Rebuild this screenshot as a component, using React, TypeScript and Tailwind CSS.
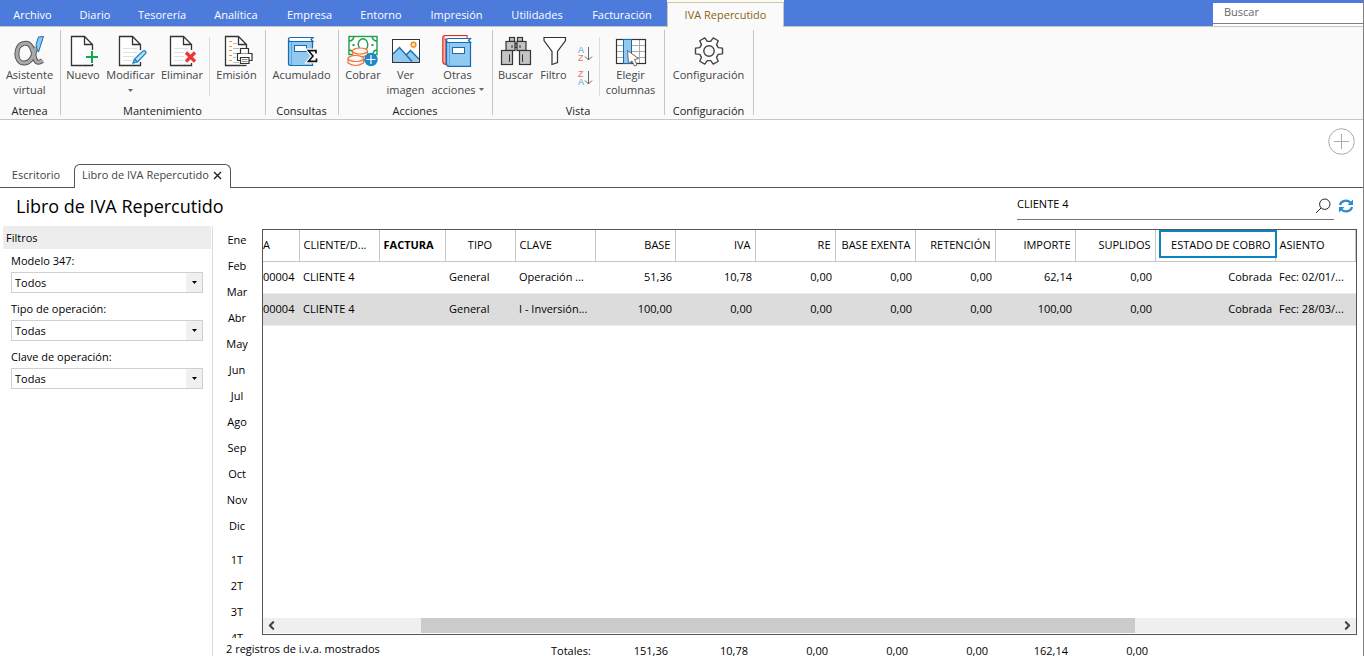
import { useState } from 'react'
import type { ReactNode } from 'react'
import { ChevronLeft, ChevronRight } from 'lucide-react'

const menu = [
  { label: 'Archivo', width: 'w-[65px]' },
  { label: 'Diario', width: 'w-[60px]' },
  { label: 'Tesorería', width: 'w-[74px]' },
  { label: 'Analítica', width: 'w-[74px]' },
  { label: 'Empresa', width: 'w-[73px]' },
  { label: 'Entorno', width: 'w-[70px]' },
  { label: 'Impresión', width: 'w-[81px]' },
  { label: 'Utilidades', width: 'w-[80px]' },
  { label: 'Facturación', width: 'w-[90px]' }
]

const months = ['Ene', 'Feb', 'Mar', 'Abr', 'May', 'Jun', 'Jul', 'Ago', 'Sep', 'Oct', 'Nov', 'Dic']
const quarters = ['1T', '2T', '3T', '4T']

const filters = [
  { id: 'modelo', label: 'Modelo 347:', value: 'Todos' },
  { id: 'tipo', label: 'Tipo de operación:', value: 'Todas' },
  { id: 'clave', label: 'Clave de operación:', value: 'Todas' }
]

const columns = [
  { label: 'A', width: 'w-9', head: 'text-left font-normal', cell: 'text-right' },
  { label: 'CLIENTE/D...', width: 'w-20', head: 'text-left font-normal', cell: 'text-left' },
  { label: 'FACTURA', width: 'w-[66px]', head: 'text-left font-bold', cell: 'text-left' },
  { label: 'TIPO', width: 'w-[70px]', head: 'text-center font-normal', cell: 'text-left' },
  { label: 'CLAVE', width: 'w-20', head: 'text-left font-normal', cell: 'text-left' },
  { label: 'BASE', width: 'w-20', head: 'text-right font-normal', cell: 'text-right' },
  { label: 'IVA', width: 'w-20', head: 'text-right font-normal', cell: 'text-right' },
  { label: 'RE', width: 'w-20', head: 'text-right font-normal', cell: 'text-right' },
  { label: 'BASE EXENTA', width: 'w-20', head: 'text-right font-normal', cell: 'text-right' },
  { label: 'RETENCIÓN', width: 'w-20', head: 'text-right font-normal', cell: 'text-right' },
  { label: 'IMPORTE', width: 'w-20', head: 'text-right font-normal', cell: 'text-right' },
  { label: 'SUPLIDOS', width: 'w-20', head: 'text-right font-normal', cell: 'text-right' },
  { label: 'ESTADO DE COBRO', width: 'w-[120px]', head: 'text-right font-normal', cell: 'text-right' },
  { label: 'ASIENTO', width: 'w-auto', head: 'text-left font-normal', cell: 'text-left' }
]

const rows = [
  ['00004', 'CLIENTE 4', '', 'General', 'Operación ...', '51,36', '10,78', '0,00', '0,00', '0,00', '62,14', '0,00', 'Cobrada', 'Fec: 02/01/...'],
  ['00004', 'CLIENTE 4', '', 'General', 'I - Inversión...', '100,00', '0,00', '0,00', '0,00', '0,00', '100,00', '0,00', 'Cobrada', 'Fec: 28/03/...']
]

const totals = ['151,36', '10,78', '0,00', '0,00', '0,00', '162,14', '0,00']

function Icon({ children }: { children: ReactNode }) {
  return (
    <svg viewBox="0 0 32 32" className="w-8 h-8 shrink-0" fill="none" aria-hidden="true">
      {children}
    </svg>
  )
}

function AlphaIcon() {
  const stem = 'M10 8.5 C17 7 18.5 14 20 20.5 C21 26 23 29.5 28.5 25.5'
  const bowl = 'M10 8.5 C0.5 9.5 0.5 28 10 28 C17 28 19.5 21 22 12'
  return (
    <Icon>
      <g strokeWidth="5">
        <path d={bowl} stroke="#555" />
        <path d={stem} stroke="#555" />
      </g>
      <g strokeWidth="3">
        <path d={bowl} stroke="#a9a9a9" />
        <path d={stem} stroke="#a9a9a9" />
      </g>
      <path d="M22 9.5 L24.5 2 L29.5 1.5 L24.5 17 Q22.5 14 22 9.5 Z" fill="#8cc8ef" stroke="#1a6fae" />
    </Icon>
  )
}

function Sheet() {
  return (
    <>
      <path d="M18 30.5 H4.5 V1.5 H17.5 L25.5 9.5 V15 H25.5 V9.5 H17.5 V1.5" fill="#fff" />
      <path d="M18.5 30.5 H4.5 V1.5 H17.5 L25.5 9.5 V15 M17.5 1.5 V9.5 H25.5" stroke="#333" strokeWidth="1.3" />
    </>
  )
}

function NewIcon() {
  return (
    <Icon>
      <Sheet />
      <path d="M18 30.5 H25.5 V29" stroke="#333" strokeWidth="1.3" />
      <path d="M25 16 V28 M19 22 H31" stroke="#12a84f" strokeWidth="2" />
    </Icon>
  )
}

function EditIcon() {
  return (
    <Icon>
      <Sheet />
      <path d="M8 13.5 H22 M8 17.5 H22 M8 21.5 H19 M8 25.5 H17" stroke="#e0e0e0" />
      <path d="M25.5 27 V30.5 H18" stroke="#333" strokeWidth="1.3" />
      <path d="M18 28 L19.5 24 L28 16 Q31 15 31 18 L22.5 27 Z M19.5 24 L22.5 27" fill="#b9def5" stroke="#1e86c8" strokeWidth="1.3" />
    </Icon>
  )
}

function DeleteIcon() {
  return (
    <Icon>
      <Sheet />
      <path d="M8 13.5 H22 M8 17.5 H18 M8 21.5 H18 M8 25.5 H17" stroke="#e0e0e0" />
      <path d="M25.5 28 V30.5 H18" stroke="#333" strokeWidth="1.3" />
      <path d="M20 17.5 L29 26.5 M29 17.5 L20 26.5" stroke="#ee3535" strokeWidth="3.2" />
    </Icon>
  )
}

function PrintIcon() {
  return (
    <Icon>
      <Sheet />
      <path d="M8 6.5 H11 M8 11.5 H11 M8 15.5 H11 M8 20.5 H11 M8 25.5 H11" stroke="#f39a1e" strokeWidth="1.2" />
      <path d="M12 8.5 H16 M12 13.5 H18 M12 18.5 H16 M12 22.5 H15 M12 27.5 H18" stroke="#bbb" />
      <path d="M18 30.5 H25.5" stroke="#333" strokeWidth="1.3" />
      <path d="M16.5 25.5 V18.5 H31 V25.5 Z" fill="#fff" stroke="#333" strokeWidth="1.2" />
      <path d="M19.5 18.5 V13.5 H27.5 V18.5 M19.5 22.5 H28 V28.5 H19.5 Z" fill="#fff" stroke="#333" strokeWidth="1.2" />
      <path d="M21 24.5 H26.5 M21 26.5 H26.5" stroke="#888" />
    </Icon>
  )
}

function LedgerIcon() {
  return (
    <Icon>
      <path d="M2.5 5 V28.5 Q2.5 30.5 5 30.5 H26.5 V6.5 H4.5 Q2.5 6.5 2.5 4.5" fill="#92c9f0" stroke="#176bb0" strokeWidth="1.2" />
      <path d="M4.5 6.5 Q2.5 6.5 2.5 4.2 Q2.5 2.5 4.5 2.5 H27 L25 4.5 L27 6.5 Z" fill="#fff" stroke="#176bb0" strokeWidth="1.2" />
      <path d="M5.5 7 V30" stroke="#5da8dc" />
      <rect x="8.5" y="10.5" width="12" height="6" fill="#fff" stroke="#176bb0" />
      <path d="M30 18 V15.5 H22.5 L27 21 L22.5 26.5 H30.5 V24" stroke="#fff" strokeWidth="4" />
      <path d="M30 18.5 V15.7 H22.5 L27 21 L22.5 26.3 H30.5 V23.5" stroke="#111" strokeWidth="1.7" />
    </Icon>
  )
}

function CashIcon() {
  return (
    <Icon>
      <rect x="2" y="1.5" width="28" height="18" fill="#fff" stroke="#1f9e4b" strokeWidth="1.4" />
      <path d="M2 6 Q6 6 7 1.5 M25 1.5 Q26 6 30 6 M2 15 Q5 15 7 18 M30 15 Q27 15 26 18" stroke="#1f9e4b" strokeWidth="1.4" />
      <path d="M12.5 13 Q10 9 12.5 5.5 Q16 2 19.5 5.5 Q22 10 19.5 14" stroke="#1f9e4b" strokeWidth="1.4" />
      <path d="M6.5 9 V11 M25.5 9 V11" stroke="#1f9e4b" strokeWidth="2" />
      <path d="M5 16 V26 H20 V16 Z M1 24 V30 H16 V24 Z" fill="#fff" />
      <g fill="#fff6ef" stroke="#e8763a" strokeWidth="1.2">
        <path d="M5.5 16 V20 Q12.5 24.5 20.5 20 V16 M20.5 20 V24 Q17 26.5 14 26" />
        <ellipse cx="13" cy="16" rx="7.5" ry="3" />
        <path d="M1 23.5 V28 Q8.5 33 16.5 28 V23.5" />
        <ellipse cx="8.7" cy="23.5" rx="7.7" ry="3" />
      </g>
      <circle cx="24" cy="24.5" r="6.7" fill="#1e87cb" />
      <path d="M24 20 V29 M19.5 24.5 H28.5" stroke="#fff" strokeWidth="1.2" />
    </Icon>
  )
}

function PictureIcon() {
  return (
    <Icon>
      <rect x="2.5" y="4.5" width="27" height="23" fill="#fff" />
      <path d="M3 19 L9.5 12.5 L16 20 L20.5 15.5 L29 24 V27 H3 Z" fill="#92c9f0" />
      <path d="M3 19 L9.5 12.5 L22 26.5 M16 20 L20.5 15.5 L29 24" stroke="#176bb0" strokeWidth="1.3" />
      <circle cx="23.5" cy="9.7" r="2.4" fill="#fde3a8" stroke="#f08a24" strokeWidth="1.4" />
      <rect x="2.5" y="4.5" width="27" height="23" stroke="#333" />
    </Icon>
  )
}

function BooksIcon() {
  return (
    <Icon>
      <path d="M0.8 2.5 V26.5 Q1 29.5 4 29.5 V4.5 H25 V0.6 H3 Q0.8 0.6 0.8 3" fill="#f6b3b3" stroke="#e02a2a" strokeWidth="1.2" />
      <path d="M3 1.2 H24.5 V4 H3 Z" fill="#fff" />
      <path d="M2.5 4.2 H24" stroke="#e02a2a" />
      <path d="M4.5 5 V29 Q4.5 31.3 7 31.3 H28.5 V7.5 H6.5 Q4.5 7.5 4.5 5.5" fill="#92c9f0" stroke="#176bb0" strokeWidth="1.2" />
      <path d="M6.5 7.5 Q4.5 7.5 4.5 5.2 Q4.5 3.5 6.5 3.5 H28.5 L26.5 5.5 L28.5 7.5 Z" fill="#fff" stroke="#176bb0" strokeWidth="1.2" />
      <path d="M7.5 8 V31" stroke="#5da8dc" />
      <rect x="10.5" y="12.5" width="12" height="6" fill="#fff" stroke="#176bb0" />
    </Icon>
  )
}

function BinocularsIcon() {
  return (
    <Icon>
      <g fill="#c4c4c4" stroke="#333" strokeWidth="1.2">
        <rect x="14.5" y="8.5" width="3" height="4" />
        <rect x="9.5" y="2.5" width="5" height="4" />
        <rect x="17.5" y="2.5" width="5" height="4" />
        <rect x="6" y="6.5" width="9" height="9" />
        <rect x="17" y="6.5" width="9" height="9" />
        <rect x="1.5" y="15.5" width="11" height="14" />
        <rect x="19.5" y="15.5" width="11" height="14" />
      </g>
      <path d="M12 10 V13 M20 10 V13 M9.5 19.5 V27 M22.5 19.5 V27" stroke="#333" />
    </Icon>
  )
}

function FunnelIcon() {
  return (
    <Icon>
      <path d="M6 2.5 H27.5 V5.5 L19.5 16.5 V27.5 L14 29.5 V16.5 L6 5.5 Z" fill="#fff" stroke="#333" strokeWidth="1.2" />
    </Icon>
  )
}

function ColumnsIcon() {
  return (
    <Icon>
      <rect x="1.5" y="4.5" width="29" height="24" fill="#fff" />
      <path d="M2 10.5 H30 M2 16.5 H30 M2 22.5 H30 M24.5 5 V28" stroke="#aaa" />
      <rect x="1.5" y="4.5" width="29" height="24" stroke="#333" strokeWidth="1.2" />
      <rect x="8.5" y="4.5" width="8" height="24" fill="#92c9f0" stroke="#176bb0" />
      <path d="M12.5 15.5 L23.5 23.5 L19.5 24.5 L22 30 L19.5 31 L17 26 L13.5 28.5 Z" fill="#fff" stroke="#666" />
    </Icon>
  )
}

// Gear outline with six teeth, centred on 16,16
const gearPoints = [0, 60, 120, 180, 240, 300]
  .flatMap((deg) => [
    [deg - 20, 9.8],
    [deg - 12, 13.8],
    [deg + 12, 13.8],
    [deg + 20, 9.8]
  ])
  .map(([deg, r]) => {
    const a = (deg * Math.PI) / 180
    return `${(16 + r * Math.cos(a)).toFixed(2)},${(16 + r * Math.sin(a)).toFixed(2)}`
  })
  .join(' ')

function GearIcon() {
  return (
    <Icon>
      <polygon points={gearPoints} fill="#fff" stroke="#444" strokeWidth="1.4" strokeLinejoin="round" />
      <circle cx="16" cy="16" r="5.2" fill="#fafafa" stroke="#444" strokeWidth="1.4" />
    </Icon>
  )
}

function SortButton({ first, second, label }: { first: string; second: string; label: string }) {
  return (
    <button type="button" aria-label={label}>
      <svg viewBox="0 0 16 16" className="w-4 h-4" fill="none" fontFamily="Liberation Sans, sans-serif" fontSize="9">
        <text x="1" y="7" fill={first === 'A' ? '#4aa3dc' : '#f06a6a'}>{first}</text>
        <text x="1" y="15" fill={second === 'A' ? '#4aa3dc' : '#f06a6a'}>{second}</text>
        <path d="M11.5 1 V14 M8 10.5 L11.5 14 L15 10.5" stroke="#666" />
      </svg>
    </button>
  )
}

function Arrow() {
  return (
    <svg viewBox="0 0 5 3" className="w-[5px] h-[3px]" aria-hidden="true">
      <path d="M0 0 H5 L2.5 3 Z" fill="#666" />
    </svg>
  )
}

function Tool({ icon, lines, width, arrow }: { icon: ReactNode; lines: string[]; width: string; arrow?: 'below' | 'side' }) {
  return (
    <button type="button" className={`flex flex-col items-center text-[#444] whitespace-nowrap ${width}`}>
      {icon}
      <span className="leading-[15px]">{lines[0]}</span>
      {lines[1] && (
        <span className="flex items-center gap-[3px] leading-[15px]">
          {lines[1]}
          {arrow === 'side' && <Arrow />}
        </span>
      )}
      {arrow === 'below' && <span className="mt-[7px]"><Arrow /></span>}
    </button>
  )
}

function Group({ label, width, children }: { label: string; width: string; children: ReactNode }) {
  return (
    <div className={`relative flex flex-col justify-between h-[92px] pt-2 pb-px pr-[2px] ${width}`}>
      <div className="flex justify-center">{children}</div>
      <div className="text-center text-[#222] leading-[15px]">{label}</div>
      <span className="absolute right-0 top-[3px] bottom-1 w-px bg-[#c6c6c6]" />
    </div>
  )
}

function Ribbon() {
  return (
    <div className="flex bg-[#fafafa] border-b border-[#c6c6c6]">
      <Group label="Atenea" width="w-[61px]">
        <Tool icon={<AlphaIcon />} lines={['Asistente', 'virtual']} width="w-[58px]" />
      </Group>
      <Group label="Mantenimiento" width="w-[205px]">
        <Tool icon={<NewIcon />} lines={['Nuevo']} width="w-[42px]" />
        <Tool icon={<EditIcon />} lines={['Modificar']} width="w-[53px]" arrow="below" />
        <Tool icon={<DeleteIcon />} lines={['Eliminar']} width="w-[50px]" />
        <span className="ml-[2px] mt-[2px] w-px h-[59px] bg-[#dcdcdc]" />
        <Tool icon={<PrintIcon />} lines={['Emisión']} width="w-[53px]" />
      </Group>
      <Group label="Consultas" width="w-[73px]">
        <Tool icon={<LedgerIcon />} lines={['Acumulado']} width="w-[70px]" />
      </Group>
      <Group label="Acciones" width="w-[154px]">
        <Tool icon={<CashIcon />} lines={['Cobrar']} width="w-[41px]" />
        <Tool icon={<PictureIcon />} lines={['Ver', 'imagen']} width="w-[44px]" />
        <Tool icon={<BooksIcon />} lines={['Otras', 'acciones']} width="w-[60px]" arrow="side" />
      </Group>
      <Group label="Vista" width="w-[172px]">
        <Tool icon={<BinocularsIcon />} lines={['Buscar']} width="w-[38px]" />
        <Tool icon={<FunnelIcon />} lines={['Filtro']} width="w-[38px]" />
        <div className="flex flex-col items-center gap-2 w-6 pt-[11px]">
          <SortButton first="A" second="Z" label="Orden ascendente" />
          <SortButton first="Z" second="A" label="Orden descendente" />
        </div>
        <span className="mx-[2px] mt-[2px] w-px h-[59px] bg-[#dcdcdc]" />
        <Tool icon={<ColumnsIcon />} lines={['Elegir', 'columnas']} width="w-[58px]" />
      </Group>
      <Group label="Configuración" width="w-[89px]">
        <Tool icon={<GearIcon />} lines={['Configuración']} width="w-[86px]" />
      </Group>
    </div>
  )
}

function MenuBar() {
  return (
    <header className="flex h-[27px] bg-[#4c7bdb] border-b border-[#c6c6c6]">
      <nav className="flex">
        {menu.map((item) => (
          <a key={item.label} href="#" className={`flex items-center justify-center pt-1 text-white ${item.width}`}>
            {item.label}
          </a>
        ))}
        <div className="h-[27px] bg-[#fffbe6] pt-[2px]">
          <a href="#" className="flex items-center justify-center w-[117px] h-[25px] bg-[#fafafa] border border-b-0 border-[#c6c6c6] text-[#8a6410]">
            IVA Repercutido
          </a>
        </div>
      </nav>
      <div className="ml-auto mt-[3px] w-[150px] bg-white">
        <input
          type="text"
          aria-label="Buscar"
          placeholder="Buscar"
          className="block w-full h-[21px] pl-[11px] pb-1 border-b border-[#808080] outline-none placeholder:text-[#666]"
        />
      </div>
    </header>
  )
}

function DocumentTabs() {
  return (
    <div>
      <div className="flex justify-end h-[44px] pt-2 pr-2">
        <button type="button" aria-label="Añadir" className="w-[27px] h-[27px]">
          <svg viewBox="0 0 27 27" fill="none" stroke="#aaa" aria-hidden="true">
            <circle cx="13.5" cy="13.5" r="12.8" />
            <path d="M13.5 6 V21 M6 13.5 H21" />
          </svg>
        </button>
      </div>
      <div className="flex h-6 text-[#444]">
        <a href="#" className="w-[74px] pr-[2px] border-b border-[#555] text-center leading-[22px]">
          Escritorio
        </a>
        <div className="flex items-center w-[157px] pl-[7px] pr-2 pb-[2px] justify-between border border-b-0 border-[#555] rounded-t-md whitespace-nowrap">
          Libro de IVA Repercutido
          <button type="button" aria-label="Cerrar" className="w-[9px] h-[9px]">
            <svg viewBox="0 0 9 9" className="w-[9px] h-[9px]" aria-hidden="true">
              <path d="M1 1 L8 8 M8 1 L1 8" stroke="#222" strokeWidth="1.4" />
            </svg>
          </button>
        </div>
        <div className="flex-1 border-b border-[#555]" />
      </div>
    </div>
  )
}

function TitleBar() {
  const [search, setSearch] = useState('CLIENTE 4')

  return (
    <div className="flex items-start justify-between h-[38px] pl-4 pr-[9px]">
      <h1 className="text-[18px] leading-9">Libro de IVA Repercutido</h1>
      <div className="flex">
        <div className="flex w-[317px] h-8 border-b border-[#777]">
          <input
            type="text"
            aria-label="Buscar en el libro"
            value={search}
            onChange={(e) => setSearch(e.target.value)}
            className="flex-1 h-[30px] outline-none"
          />
          <button type="button" aria-label="Buscar" className="mr-[3px] mt-1">
            <svg viewBox="0 0 16 16" className="w-4 h-4" fill="none" stroke="#222" aria-hidden="true">
              <circle cx="9.8" cy="6.2" r="5.2" />
              <path d="M6 10 L1 15" />
            </svg>
          </button>
        </div>
        <button type="button" aria-label="Actualizar" className="ml-1 mt-[3px]">
          <svg viewBox="0 0 16 16" className="w-4 h-4" fill="none" aria-hidden="true">
            <path d="M2 7 A6 5.2 0 0 1 12.5 4.5 M14 9 A6 5.2 0 0 1 3.5 11.5" stroke="#2a8bd0" strokeWidth="2.2" />
            <path d="M15 1.5 V7 H9.5 Z M1 14.5 V9 H6.5 Z" fill="#2a8bd0" />
          </svg>
        </button>
      </div>
    </div>
  )
}

function FilterPanel() {
  return (
    <aside className="w-[213px] shrink-0 pl-[3px] pr-px border-r border-[#dcdcdc]">
      <h2 className="h-[23px] pl-[3px] bg-[#ededed] leading-[23px]">Filtros</h2>
      <div className="flex flex-col gap-[7px] pt-[3px] pl-2 pr-2">
        {filters.map((filter) => (
          <div key={filter.id}>
            <label htmlFor={filter.id} className="block leading-[18px]">
              {filter.label}
            </label>
            <div className="relative mt-[2px]">
              <select id={filter.id} className="block appearance-none w-full h-[21px] pl-[3px] bg-white border border-[#cfcfcf] rounded-none leading-[19px]">
                <option>{filter.value}</option>
              </select>
              <span className="absolute right-px top-px bottom-px w-4 flex items-center justify-center bg-[#f0f0f0] pointer-events-none">
                <svg viewBox="0 0 5 3" className="w-[5px] h-[3px]" aria-hidden="true">
                  <path d="M0 0 H5 L2.5 3 Z" fill="#000" />
                </svg>
              </span>
            </div>
          </div>
        ))}
      </div>
    </aside>
  )
}

function PeriodList() {
  return (
    <div className="w-[49px] h-[412px] shrink-0 overflow-hidden pt-px pr-px">
      {months.map((month) => (
        <button key={month} type="button" className="block w-full h-[26px]">
          {month}
        </button>
      ))}
      <div className="h-2" />
      {quarters.map((quarter) => (
        <button key={quarter} type="button" className="block w-full h-[26px]">
          {quarter}
        </button>
      ))}
    </div>
  )
}

function InvoiceGrid() {
  return (
    <div className="flex-1 min-w-0 flex flex-col border border-[#555]">
      <div className="flex-1 overflow-hidden">
        <table className="w-full table-fixed border-collapse whitespace-nowrap">
          <thead>
            <tr className="h-[31px]">
              {columns.map((col) => (
                <th
                  key={col.label}
                  className={`relative py-0 border-r border-b border-[#c6c6c6] ${
                    col.label === 'A' ? 'px-0' : 'px-1'
                  } ${col.width} ${col.head}`}
                >
                  {col.label}
                  {col.label === 'ESTADO DE COBRO' && (
                    <span className="absolute left-[3px] -right-[2px] top-0 bottom-[3px] border-2 border-[#0a84c6]" />
                  )}
                </th>
              ))}
            </tr>
          </thead>
          <tbody>
            {rows.map((row, i) => (
              <tr key={i} className={`h-8 border-b border-[#ececec] ${i === 1 ? 'bg-[#dcdcdc]' : 'bg-white'}`}>
                {row.map((cell, j) => (
                  <td key={j} className={`py-0 overflow-hidden ${j === 0 ? 'pl-0 pr-[6px]' : j > 4 && j < 13 ? 'pl-1 pr-[3px]' : 'px-1'} ${columns[j].cell}`}>
                    {cell}
                  </td>
                ))}
              </tr>
            ))}
          </tbody>
        </table>
      </div>
      {/* Barra de desplazamiento */}
      <div className="flex items-center h-[15px] mb-px bg-[#efefef] text-[#444]">
        <div className="w-[14.5%] pl-[2px]">
          <ChevronLeft size={13} strokeWidth={4} />
        </div>
        <div className="w-[65.3%] h-full bg-[#cbcbcb]" />
        <div className="flex-1 flex justify-end pr-[2px]">
          <ChevronRight size={13} strokeWidth={4} />
        </div>
      </div>
    </div>
  )
}

export default function App() {
  return (
    <div className="flex flex-col h-screen overflow-hidden bg-white border-r border-[#808080] font-['Open_Sans','Noto_Sans',sans-serif] text-[11px] text-black">
      <MenuBar />
      <Ribbon />
      <DocumentTabs />
      <TitleBar />
      <main className="flex flex-1 min-h-0">
        <FilterPanel />
        <div className="flex-1 min-w-0 flex flex-col">
          <div className="flex flex-1 min-h-0">
            <PeriodList />
            <div className="flex-1 min-w-0 flex pt-[3px] pr-[6px]">
              <InvoiceGrid />
            </div>
          </div>
          <footer className="grid grid-cols-[338px_41px_76px_repeat(6,80px)] h-[21px] shrink-0 leading-[15px] whitespace-nowrap">
            <span className="pl-[13px] pt-[6px]">2 registros de i.v.a. mostrados</span>
            <span className="pt-2">Totales:</span>
            {totals.map((total, i) => (
              <span key={i} className="pt-2 text-right">
                {total}
              </span>
            ))}
          </footer>
        </div>
      </main>
    </div>
  )
}
